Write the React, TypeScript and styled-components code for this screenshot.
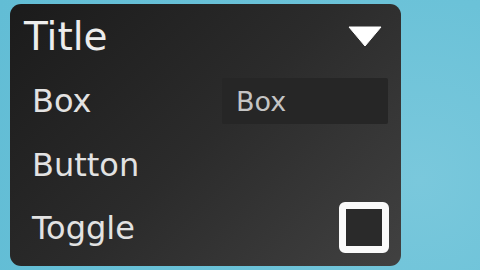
import React from "react";
import styled, { createGlobalStyle } from "styled-components";

const GlobalStyle = createGlobalStyle`
  html, body {
    margin: 0;
    padding: 0;
    width: 480px;
    height: 270px;
    overflow: hidden;
  }
  body {
    background: radial-gradient(circle at 420px 180px, #7ac8dc 0%, #6bc2d8 40%, #62bdd5 100%);
    font-family: "DejaVu Sans", "Noto Sans", sans-serif;
  }
`;

const Stage = styled.div`
  width: 480px;
  height: 270px;
  padding: 4px 0 0 10px;
  box-sizing: border-box;
`;

const Panel = styled.div`
  width: 391px;
  height: 262px;
  box-sizing: border-box;
  border-radius: 11px;
  background: linear-gradient(135deg, #1b1b1b 0%, #2b2b2b 50%, #414141 100%);
  display: flex;
  flex-direction: column;
  gap: 2px;
  padding: 0 13px 7px 14px;
`;

const Header = styled.div`
  height: 64px;
  padding-top: 1px;
  display: flex;
  align-items: center;
  justify-content: space-between;
`;

const Title = styled.span`
  font-size: 39px;
  color: #ededed;
  line-height: 1;
`;

const Arrow = styled.svg`
  width: 34px;
  height: 21px;
  margin-right: 6px;
`;

const Row = styled.div`
  height: 62px;
  display: flex;
  align-items: center;
  justify-content: space-between;
  padding-left: 8px;
`;

const Label = styled.span`
  font-size: 32px;
  color: #e2e2e2;
  line-height: 1;
`;

const Input = styled.div`
  width: 166px;
  height: 46px;
  box-sizing: border-box;
  background: #262626;
  border-radius: 2px;
  display: flex;
  align-items: center;
  padding-left: 14px;
  font-size: 27px;
  color: #c4c4c4;
`;

const Check = styled.div`
  width: 50px;
  height: 51px;
  box-sizing: border-box;
  border: 7px solid #fafafa;
  border-radius: 6px;
  background: #2a2a2a;
  margin: 0 -1px 2px 0;
`;

export default function App() {
  return (
    <>
      <GlobalStyle />
      <Stage>
        <Panel>
          <Header>
            <Title>Title</Title>
            <Arrow viewBox="0 0 34 21">
              <path d="M1 1 L33 1 L17 20 Z" fill="#fff" strokeLinejoin="round" stroke="#fff" strokeWidth="1" />
            </Arrow>
          </Header>
          <Row>
            <Label>Box</Label>
            <Input>Box</Input>
          </Row>
          <Row>
            <Label>Button</Label>
          </Row>
          <Row>
            <Label>Toggle</Label>
            <Check />
          </Row>
        </Panel>
      </Stage>
    </>
  );
}
